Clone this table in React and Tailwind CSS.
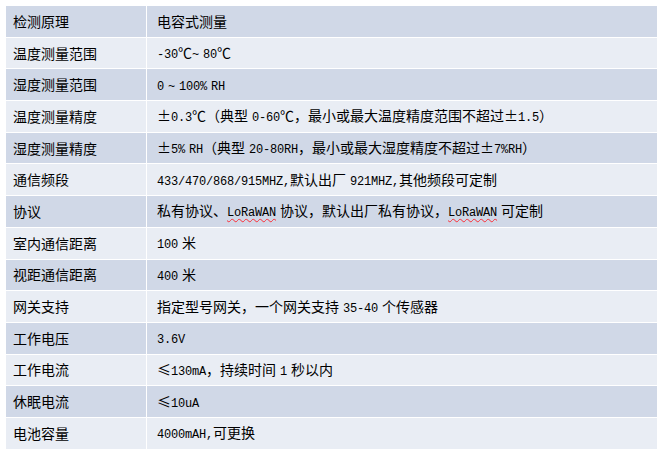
import React from 'react';

const rows = [
  ['检测原理', '电容式测量'],
  ['温度测量范围', '-30℃~ 80℃'],
  ['湿度测量范围', '0 ~ 100% RH'],
  ['温度测量精度', '±0.3℃（典型 0-60℃，最小或最大温度精度范围不超过±1.5）'],
  ['湿度测量精度', '±5% RH（典型 20-80RH，最小或最大湿度精度不超过±7%RH）'],
  ['通信频段', '433/470/868/915MHZ,默认出厂 921MHZ,其他频段可定制'],
  ['协议', '私有协议、LoRaWAN 协议，默认出厂私有协议，LoRaWAN 可定制'],
  ['室内通信距离', '100 米'],
  ['视距通信距离', '400 米'],
  ['网关支持', '指定型号网关，一个网关支持 35-40 个传感器'],
  ['工作电压', '3.6V'],
  ['工作电流', '≤130mA，持续时间 1 秒以内'],
  ['休眠电流', '≤10uA'],
  ['电池容量', '4000mAH,可更换'],
];

// latin runs are drawn in a narrow mono face, like SimSun's half-width glyphs
const Mixed = ({ text }) =>
  text.split(/([\x20-\x7E]+)/).map((s, i) => {
    if (!s) return null;
    if (/^[\x20-\x7E]+$/.test(s)) {
      const parts = s.split(/(LoRaWAN)/);
      return (
        <span key={i} className="font-['Liberation_Mono','Noto_Sans_CJK_SC',monospace] text-[12px] tracking-[-0.2px] [word-spacing:-3px] whitespace-pre">
          {parts.map((p, j) =>
            p === 'LoRaWAN' ? (
              <span key={j} className="underline decoration-wavy decoration-red-500 decoration-1 underline-offset-2">
                {p}
              </span>
            ) : (
              p
            )
          )}
        </span>
      );
    }
    return <span key={i}>{s}</span>;
  });

export default function App() {
  return (
    <div className="w-[665px] h-[456px] bg-white pt-[6px] pl-[6px]">
      <div className="w-[651px] flex flex-col gap-px font-['Noto_Sans_CJK_SC','Liberation_Sans',sans-serif] text-[14px] text-black">
        {rows.map(([k, v], idx) => (
          <div key={idx} className="grid grid-cols-[140px_1fr] gap-px h-[30.7px]">
            <div className={`flex items-center pl-[7px] ${idx % 2 === 0 ? 'bg-[#d0d8e7]' : 'bg-[#e9edf4]'}`}>
              {k}
            </div>
            <div className={`flex items-center pl-[10px] ${idx % 2 === 0 ? 'bg-[#d0d8e7]' : 'bg-[#e9edf4]'}`}>
              <span>
                <Mixed text={v} />
              </span>
            </div>
          </div>
        ))}
      </div>
    </div>
  );
}
